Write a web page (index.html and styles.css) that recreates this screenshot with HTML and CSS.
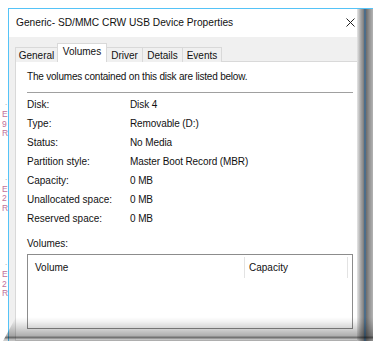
FILE: index.html
```html
<!DOCTYPE html>
<html>
<head>
<meta charset="utf-8">
<link rel="stylesheet" href="styles.css">
</head>
<body>
<div class="screen">
  <div class="bg-strip">
    <span class="dot">.</span>
    <span class="ch">E</span><span class="ch">9</span><span class="ch">R</span>
    <span class="dot dot2">.</span>
    <span class="ch">E</span><span class="ch">2</span><span class="ch">R</span>
    <span class="dot dot3">.</span>
    <span class="ch">E</span><span class="ch">2</span><span class="ch">R</span>
  </div>
  <div class="window">
    <div class="main">
      <div class="titlebar">
        <span class="title">Generic- SD/MMC CRW USB Device Properties</span>
        <svg class="close" width="9" height="9" viewBox="0 0 9 9"><path d="M0.5 0.5 L8.5 8.5 M8.5 0.5 L0.5 8.5" stroke="#222" stroke-width="1" fill="none"/></svg>
      </div>
      <div class="body">
        <div class="tabs">
          <div class="tab t-general">General</div>
          <div class="tab active t-volumes">Volumes</div>
          <div class="tab t-driver">Driver</div>
          <div class="tab t-details">Details</div>
          <div class="tab t-events">Events</div>
        </div>
        <div class="panel">
          <div class="intro">The volumes contained on this disk are listed below.</div>
          <div class="sep"></div>
          <div class="rows">
            <div class="row"><span class="lbl">Disk:</span><span class="val">Disk 4</span></div>
            <div class="row"><span class="lbl">Type:</span><span class="val">Removable (D:)</span></div>
            <div class="row"><span class="lbl">Status:</span><span class="val">No Media</span></div>
            <div class="row"><span class="lbl">Partition style:</span><span class="val">Master Boot Record (MBR)</span></div>
            <div class="row"><span class="lbl">Capacity:</span><span class="val">0 MB</span></div>
            <div class="row"><span class="lbl">Unallocated space:</span><span class="val">0 MB</span></div>
            <div class="row"><span class="lbl">Reserved space:</span><span class="val">0 MB</span></div>
          </div>
          <div class="vol-label">Volumes:</div>
          <div class="listbox">
            <div class="lhead">
              <div class="col c1">Volume</div>
              <div class="col c2">Capacity</div>
            </div>
          </div>
        </div>
      </div>
    </div>
    <div class="shadow-right"></div>
    <div class="shadow-bottom"></div>
  </div>
</div>
</body>
</html>
```
FILE: styles.css
```css
html, body {
  margin: 0;
  padding: 0;
  background: #fff;
}
.screen {
  position: relative;
  width: 373px;
  height: 341px;
  overflow: hidden;
  display: flex;
  padding-top: 8px;
  box-sizing: border-box;
  font-family: "Liberation Sans", Arial, sans-serif;
  font-size: 10px;
  color: #111;
}
.bg-strip {
  width: 8px;
  flex: none;
  display: flex;
  flex-direction: column;
  align-items: flex-start;
  padding-top: 88px;
  padding-left: 2px;
  box-sizing: border-box;
  font-size: 8px;
  line-height: 9.5px;
}
.bg-strip .ch {
  color: #c0709a;
  font-size: 8.5px;
}
.bg-strip .dot {
  color: #999;
  margin-left: 3px;
  line-height: 14px;
}
.bg-strip .dot2 { margin-top: 32px; }
.bg-strip .dot3 { margin-top: 43px; }
.window {
  position: relative;
  flex: 1;
  display: flex;
  border-left: 1px solid #55c3f7;
  border-top: 1px solid #55c3f7;
  background: #f0f0f0;
}
.main {
  width: 348px;
  flex: none;
  display: flex;
  flex-direction: column;
}
.titlebar {
  height: 27px;
  background: #fff;
  display: flex;
  align-items: center;
  justify-content: space-between;
  padding: 0 2px 1px 7px;
}
.title {
  font-size: 10.2px;
  color: #111;
}
.close { display: block; margin-top: 0; }
.body {
  flex: 1;
  display: flex;
  flex-direction: column;
  padding-left: 6px;
}
.tabs {
  display: flex;
  align-items: flex-end;
  margin-top: 6px;
  height: 19px;
  position: relative;
  z-index: 1;
  margin-bottom: -1px;
}
.tab {
  height: 15px;
  border: 1px solid #d9d9d9;
  border-bottom: none;
  border-left: none;
  background: #f0f0f0;
  display: flex;
  align-items: center;
  justify-content: center;
  box-sizing: border-box;
  line-height: 12px;
  padding-top: 1px;
}
.t-general { width: 43px; border-left: 1px solid #d9d9d9; }
.t-volumes { width: 49px; }
.t-driver { width: 36px; }
.t-details { width: 40px; }
.t-events { width: 39px; }
.tab.active {
  height: 19px;
  background: #fff;
  border: 1px solid #d9d9d9;
  border-bottom: none;
  margin-left: -1px;
  width: 50px;
  padding-bottom: 3px;
  padding-top: 0;
}
.panel {
  flex: 1;
  background: #fff;
  border: 1px solid #d9d9d9;
  border-right: none;
  padding: 8px 4px 0 11px;
}
.intro { line-height: 14px; letter-spacing: -0.2px; }
.sep {
  height: 1px;
  background: #a0a0a0;
  margin-top: 8px;
}
.rows {
  display: flex;
  flex-direction: column;
  gap: 5px;
  margin-top: 5px;
}
.row {
  display: flex;
  line-height: 14px;
}
.lbl { width: 103px; flex: none; }
.val { letter-spacing: -0.1px; }
.vol-label {
  margin-top: 11px;
  line-height: 14px;
}
.listbox {
  margin-top: 3px;
  height: 75px;
  box-sizing: border-box;
  border: 1px solid #8c8c8c;
}
.lhead {
  display: flex;
  height: 24px;
}
.col {
  display: flex;
  align-items: center;
  padding-left: 7px;
  padding-bottom: 1px;
}
.c1 {
  width: 209px;
  border-right: 1px solid #e3e3e3;
  margin: 2px 0 1px 0;
  padding-left: 7px;
}
.c2 {
  width: 98px;
  border-right: 1px solid #e3e3e3;
  margin: 2px 0 1px 0;
  padding-left: 4px;
}
.shadow-right {
  flex: 1;
  background: linear-gradient(to right, #e6e6e6 0, #c4c4c4 2px, #a2a2a2 4px, #8a8a8a 6px, #767676 7px, #4c6d8a 7px, #4c6d8a 9px, #6c6c6c 9px, #8e8e8e 12px, #b4b4b4 16px);
}
.shadow-bottom {
  position: absolute;
  left: -9px;
  right: 0;
  bottom: 0;
  height: 24px;
  background: linear-gradient(to bottom, rgba(0,0,0,0) 0, rgba(0,0,0,0.06) 5px, rgba(0,0,0,0.18) 12px, rgba(0,0,0,0.32) 19px, rgba(0,0,0,0.55) 20px, rgba(0,0,0,0.55) 21px, rgba(0,0,0,0.25) 22px, rgba(0,0,0,0.18) 24px);
  clip-path: polygon(16px 0, 100% 0, 100% 100%, 3px 100%);
}
```
